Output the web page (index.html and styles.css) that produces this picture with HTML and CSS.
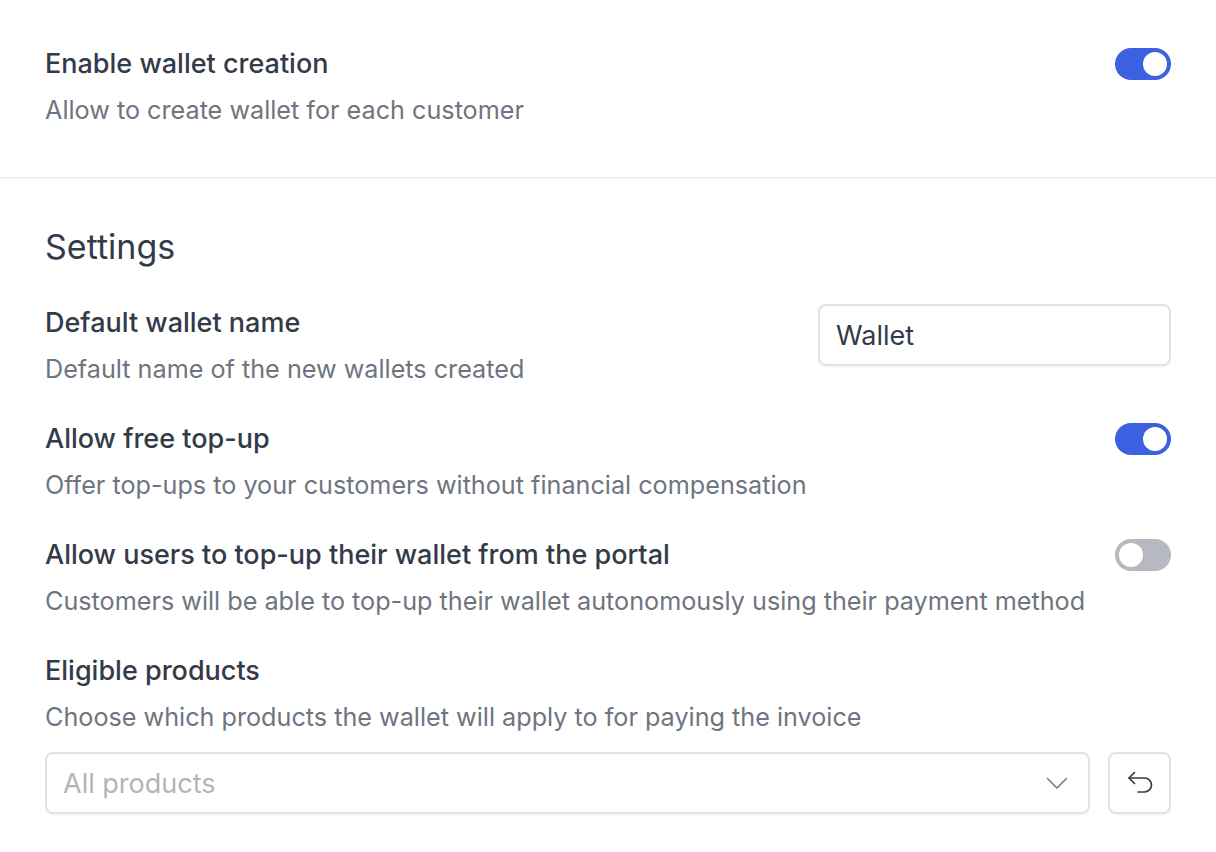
FILE: index.html
```html
<!DOCTYPE html>
<html>
<head>
<meta charset="utf-8">
<link rel="stylesheet" href="styles.css">
</head>
<body>
<div class="page">
  <section class="top">
    <div class="row">
      <div class="text">
        <div class="title">Enable wallet creation</div>
        <div class="desc">Allow to create wallet for each customer</div>
      </div>
      <div class="toggle on"><span class="knob"></span></div>
    </div>
  </section>
  <section class="settings">
    <h2 class="heading">Settings</h2>
    <div class="rows">
      <div class="row">
        <div class="text">
          <div class="title">Default wallet name</div>
          <div class="desc">Default name of the new wallets created</div>
        </div>
        <div class="input">Wallet</div>
      </div>
      <div class="row">
        <div class="text">
          <div class="title">Allow free top-up</div>
          <div class="desc">Offer top-ups to your customers without financial compensation</div>
        </div>
        <div class="toggle on"><span class="knob"></span></div>
      </div>
      <div class="row">
        <div class="text">
          <div class="title">Allow users to top-up their wallet from the portal</div>
          <div class="desc">Customers will be able to top-up their wallet autonomously using their payment method</div>
        </div>
        <div class="toggle"><span class="knob"></span></div>
      </div>
      <div class="block">
        <div class="title">Eligible products</div>
        <div class="desc">Choose which products the wallet will apply to for paying the invoice</div>
        <div class="select-row">
          <div class="select">
            <span class="placeholder">All products</span>
            <svg class="chev" width="24" height="24" viewBox="0 0 24 24" fill="none" stroke="currentColor" stroke-width="1.6" stroke-linecap="round" stroke-linejoin="round"><path d="M2.5 7.5 12 17l9.5-9.5"/></svg>
          </div>
          <div class="btn">
            <svg width="30" height="30" viewBox="0 0 30 30" fill="none" stroke="currentColor" stroke-width="1.7" stroke-linecap="round" stroke-linejoin="round"><path d="M9.5 4.5 4 10l5.5 5.5"/><path d="M4 10h15.5a7 7 0 0 1 0 14H13"/></svg>
          </div>
        </div>
      </div>
    </div>
  </section>
</div>
</body>
</html>
```

FILE: styles.css
```css
* { box-sizing: border-box; }
html, body { margin: 0; padding: 0; background: #ffffff; }
body {
  font-family: Inter, "Noto Sans", "Liberation Sans", sans-serif;
  color: #333a48;
}
.page { width: 1216px; }
.top {
  padding: 48px 45px 51px;
  border-bottom: 2px solid #f0f0f0;
}
.row {
  display: flex;
  justify-content: space-between;
  align-items: flex-start;
}
.title {
  font-size: 27px;
  font-weight: 500;
  line-height: 32px;
  color: #333a48;
}
.desc {
  margin-top: 14px;
  font-size: 25.2px;
  line-height: 32px;
  color: #6f7580;
}
.toggle {
  width: 56px;
  height: 32px;
  border-radius: 16px;
  background: #b6b9bf;
  padding: 4px;
  display: flex;
  flex-shrink: 0;
}
.toggle.on {
  background: #3b60e0;
  justify-content: flex-end;
}
.knob {
  width: 24px;
  height: 24px;
  border-radius: 50%;
  background: #ffffff;
}
.settings {
  padding: 48px 45px 40px;
}
.heading {
  margin: 0 0 40px;
  font-size: 34px;
  font-weight: 400;
  line-height: 40px;
  color: #333a48;
}
.rows {
  display: flex;
  flex-direction: column;
  gap: 38px;
}
.input {
  width: 353px;
  height: 62px;
  margin-top: -3px;
  flex-shrink: 0;
  border: 2px solid #dfe2e7;
  border-radius: 8px;
  box-shadow: 0 1px 2px rgba(0,0,0,0.05);
  padding: 0 16px;
  display: flex;
  align-items: center;
  font-size: 27px;
  color: #333a48;
}
.select-row {
  margin-top: 19px;
  display: flex;
  gap: 18px;
}
.select {
  flex: 1;
  height: 62px;
  border: 2px solid #dfe2e7;
  border-radius: 8px;
  box-shadow: 0 1px 2px rgba(0,0,0,0.05);
  padding: 0 19px 0 16px;
  display: flex;
  align-items: center;
  justify-content: space-between;
}
.placeholder {
  font-size: 27px;
  color: #b1b5bc;
}
.chev { color: #767c86; }
.btn {
  width: 63px;
  height: 62px;
  flex-shrink: 0;
  border: 2px solid #dfe2e7;
  border-radius: 8px;
  box-shadow: 0 1px 2px rgba(0,0,0,0.05);
  display: flex;
  align-items: center;
  justify-content: center;
  color: #333a48;
}
```
